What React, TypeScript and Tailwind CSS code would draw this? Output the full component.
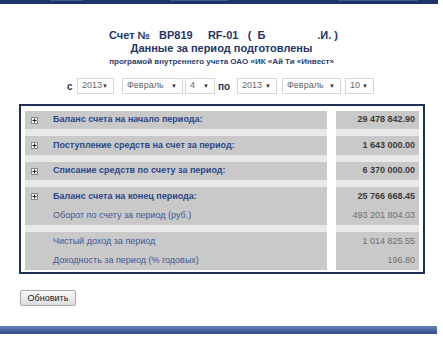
import React from 'react';

type Line = { text: string; value: string; strong?: boolean };
type Row = { h: string; icon: boolean; lines: Line[] };

const ROWS: Row[] = [
  { h: 'h-[18px]', icon: true, lines: [{ text: 'Баланс счета на начало периода:', value: '29 478 842.90', strong: true }] },
  { h: 'h-[19px]', icon: true, lines: [{ text: 'Поступление средств на счет за период:', value: '1 643 000.00', strong: true }] },
  { h: 'h-[18px]', icon: true, lines: [{ text: 'Списание средств по счету за период:', value: '6 370 000.00', strong: true }] },
  {
    h: 'h-[38px]',
    icon: true,
    lines: [
      { text: 'Баланс счета на конец периода:', value: '25 766 668.45', strong: true },
      { text: 'Оборот по счету за период (руб.)', value: '493 201 804.03' },
    ],
  },
  {
    h: 'h-[38px]',
    icon: false,
    lines: [
      { text: 'Чистый доход за период', value: '1 014 825.55' },
      { text: 'Доходность за период (% годовых)', value: '196.80' },
    ],
  },
];

const Select = ({ value, w }: { value: string; w: string }) => (
  <div className={`${w} h-[16px] flex items-center justify-between pl-[4px] pr-[5px] border border-[#d6d6d6] bg-white text-[9px] text-[#666]`}>
    <span>{value}</span>
    <span className="text-[6px] text-[#333]">▼</span>
  </div>
);

const PlusIcon = () => (
  <div className="w-[7px] h-[7px] border border-[#8a8a8a] bg-[#f2f2f2] flex items-center justify-center">
    <svg width="5" height="5" viewBox="0 0 5 5">
      <path d="M2.5 0.5v4M0.5 2.5h4" stroke="#222" strokeWidth="1" />
    </svg>
  </div>
);

export default function App() {
  return (
    <div
      className="w-[443px] h-[344px] bg-white overflow-hidden flex flex-col"
      style={{ fontFamily: '"Liberation Sans", Arial, sans-serif' }}
    >
      {/* top nav strip */}
      <div className="w-[438px] h-[4px] bg-[#1b3566] flex">
        <div className="w-[50px]" />
        <div className="w-[33px] h-[1px] bg-[#3e5a96]" />
        <div className="w-[87px]" />
        <div className="w-[58px] h-[1px] bg-[#3e5a96]" />
        <div className="w-[110px]" />
        <div className="w-[80px] h-[1px] bg-[#3e5a96]" />
      </div>

      {/* heading */}
      <div className="mt-[25px] flex flex-col items-center text-[#1f3564] font-bold">
        <div className="h-[12px] leading-[12px] text-[11px] whitespace-pre pl-[4px]">
          {'Счет №   BP819     RF-01   (  Б                 .И. )'}
        </div>
        <div className="h-[12px] leading-[12px] text-[11px] mt-[1px]">Данные за период подготовлены</div>
        <div className="h-[10px] leading-[10px] text-[8px] mt-[3px] text-[#2a3f6e]">
          програмой внутреннего учета ОАО «ИК «Ай Ти «Инвест»
        </div>
      </div>

      {/* period selectors */}
      <div className="mt-[11px] flex items-center pl-[67px] h-[16px]">
        <span className="text-[10px] font-bold text-[#1f3564] w-[10px]">с</span>
        <Select value="2013" w="w-[37px]" />
        <div className="w-[8px]" />
        <Select value="Февраль" w="w-[61px]" />
        <div className="w-[2px]" />
        <Select value="4" w="w-[30px]" />
        <span className="text-[10px] font-bold text-[#1f3564] w-[22px] pl-[3px]">по</span>
        <Select value="2013" w="w-[40px]" />
        <div className="w-[5px]" />
        <Select value="Февраль" w="w-[59px]" />
        <div className="w-[4px]" />
        <Select value="10" w="w-[29px]" />
      </div>

      {/* summary table */}
      <div className="mt-[10px] ml-[19px] w-[406px] border-2 border-[#1d2f55] bg-white pl-[4px] pr-[4px] pt-[5px] pb-[2px] flex gap-[9px] text-[9px]">
        <div className="w-[302px] flex flex-col gap-[7px] bg-[#e9e9e9]">
          {ROWS.map((r, i) => (
            <div key={i} className={`${r.h} bg-[#c9c9c9] flex flex-col`}>
              {r.lines.map((l, j) => (
                <div key={j} className="flex-1 flex items-center pl-[6px]">
                  <div className="w-[7px]">{r.icon && j === 0 && <PlusIcon />}</div>
                  <span
                    className={`ml-[15px] ${l.strong ? 'font-bold text-[#28478a]' : 'text-[#3e5894]'}`}
                  >
                    {l.text}
                  </span>
                </div>
              ))}
            </div>
          ))}
        </div>
        <div className="w-[83px] flex flex-col gap-[7px] bg-[#e9e9e9]">
          {ROWS.map((r, i) => (
            <div key={i} className={`${r.h} bg-[#c9c9c9] flex flex-col`}>
              {r.lines.map((l, j) => (
                <div
                  key={j}
                  className={`flex-1 flex items-center justify-end pr-[4px] ${
                    l.strong ? 'font-bold text-[#3c3c3c]' : 'text-[#6e6e6e]'
                  }`}
                >
                  {l.value}
                </div>
              ))}
            </div>
          ))}
        </div>
      </div>

      {/* refresh */}
      <div className="mt-[10px] ml-[20px]">
        <button className="w-[56px] h-[16px] border border-[#a8a8a8] rounded-[2px] bg-gradient-to-b from-[#fafafa] to-[#dcdcdc] text-[9px] text-[#222] leading-[14px]">
          Обновить
        </button>
      </div>

      {/* footer strip */}
      <div className="mt-[18px] w-[437px] h-[8px] bg-gradient-to-b from-[#6b82b8] to-[#2f4b8b]" />
    </div>
  );
}
